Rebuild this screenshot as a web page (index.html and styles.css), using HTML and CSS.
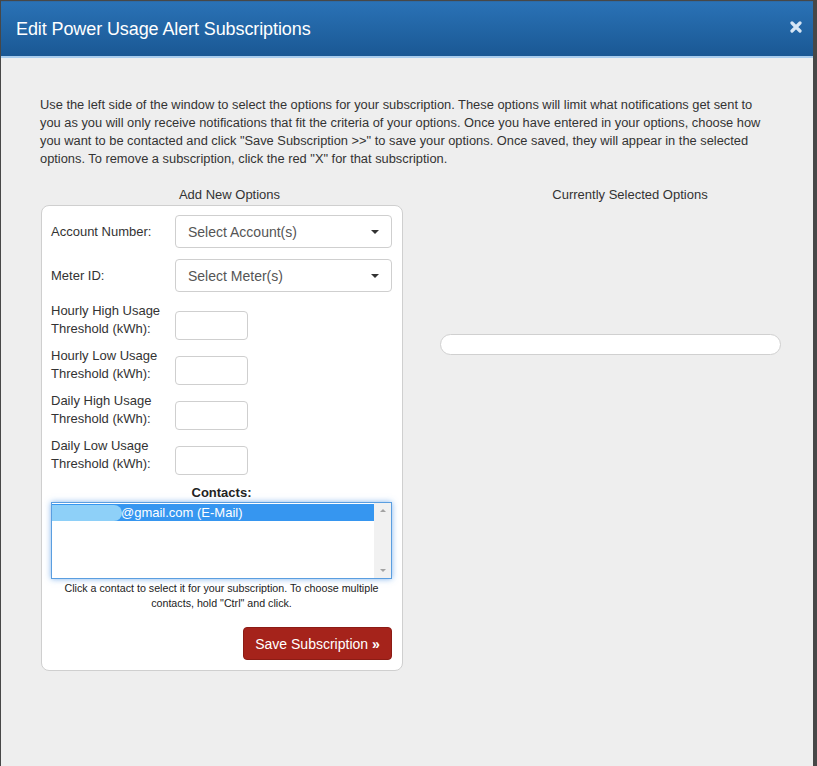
FILE: index.html
```html
<!DOCTYPE html>
<html>
<head>
<meta charset="utf-8">
<link rel="stylesheet" href="styles.css">
</head>
<body>
<div class="modal">
  <div class="modal-header">
    <h1 class="modal-title">Edit Power Usage Alert Subscriptions</h1>
    <span class="close">
      <svg width="12" height="12" viewBox="0 0 12 12"><path d="M2 2 L10 10 M10 2 L2 10" stroke="#d6e6f5" stroke-width="3.2" stroke-linecap="round"/></svg>
    </span>
  </div>
  <div class="modal-body">
    <p class="intro">Use the left side of the window to select the options for your subscription. These options will limit what notifications get sent to you as you will only receive notifications that fit the criteria of your options. Once you have entered in your options, choose how you want to be contacted and click "Save Subscription &gt;&gt;" to save your options. Once saved, they will appear in the selected options. To remove a subscription, click the red "X" for that subscription.</p>
    <div class="columns">
      <div class="col-left">
        <div class="col-title">Add New Options</div>
        <div class="panel">
          <div class="sel-row">
            <label class="lbl">Account Number:</label>
            <div class="select"><span>Select Account(s)</span><span class="caret"></span></div>
          </div>
          <div class="sel-row">
            <label class="lbl">Meter ID:</label>
            <div class="select"><span>Select Meter(s)</span><span class="caret"></span></div>
          </div>
          <div class="thresholds">
            <div class="th-row">
              <label class="lbl">Hourly High Usage<br>Threshold (kWh):</label>
              <div class="num"></div>
            </div>
            <div class="th-row">
              <label class="lbl">Hourly Low Usage<br>Threshold (kWh):</label>
              <div class="num"></div>
            </div>
            <div class="th-row">
              <label class="lbl">Daily High Usage<br>Threshold (kWh):</label>
              <div class="num"></div>
            </div>
            <div class="th-row">
              <label class="lbl">Daily Low Usage<br>Threshold (kWh):</label>
              <div class="num"></div>
            </div>
          </div>
          <div class="contacts-title">Contacts:</div>
          <div class="listbox">
            <div class="options">
              <div class="option selected"><span class="blur"></span>@gmail.com (E-Mail)</div>
            </div>
            <div class="scrollbar">
              <span class="arrow up"></span>
              <span class="arrow down"></span>
            </div>
          </div>
          <p class="help">Click a contact to select it for your subscription. To choose multiple contacts, hold "Ctrl" and click.</p>
          <div class="actions">
            <button class="save">Save Subscription <span class="raquo">&raquo;</span></button>
          </div>
        </div>
      </div>
      <div class="col-right">
        <div class="col-title">Currently Selected Options</div>
        <div class="pill"></div>
      </div>
    </div>
  </div>
</div>
</body>
</html>
```

FILE: styles.css
```css
html, body {
  margin: 0;
  padding: 0;
  height: 100%;
}
body {
  background: #474747;
  font-family: "Liberation Sans", Arial, sans-serif;
  color: #333;
  overflow: hidden;
}
.modal {
  margin: 1px 0 0 1px;
  width: 812px;
  height: 765px;
  background: #eeeeee;
  display: flex;
  flex-direction: column;
}
.modal-header {
  height: 54px;
  background: linear-gradient(#2a72b6, #1a5894);
  border-top: 1px solid #2d6aa6;
  border-bottom: 2px solid #a9cdee;
  display: flex;
  align-items: center;
  justify-content: space-between;
  padding: 0 11px 0 15px;
}
.modal-title {
  margin: 0;
  font-size: 18px;
  font-weight: normal;
  color: #fff;
  letter-spacing: -0.1px;
}
.close {
  display: flex;
  margin-top: -4px;
}
.modal-body {
  padding: 38px 43px 0 39px;
}
.intro {
  margin: 0;
  font-size: 12.85px;
  line-height: 18px;
  color: #333;
}
.columns {
  display: grid;
  grid-template-columns: 363px 380px;
  column-gap: 37px;
  margin-top: 19px;
}
.col-title {
  text-align: center;
  font-size: 13px;
  line-height: 16px;
  color: #333;
  margin-bottom: 2px;
}
.col-left .col-title {
  padding-left: 16px;
}
.panel {
  margin-left: 1px;
  background: #fff;
  border: 1px solid #cfcfcf;
  border-radius: 8px;
  padding: 9px 10px 10px 9px;
}
.lbl {
  width: 124px;
  flex: none;
  font-size: 13px;
  line-height: 18px;
  color: #333;
}
.sel-row {
  display: flex;
  align-items: center;
  margin-bottom: 11px;
}
.select {
  flex: 1;
  height: 31px;
  border: 1px solid #cfcfcf;
  border-radius: 4px;
  display: flex;
  align-items: center;
  justify-content: space-between;
  padding: 0 12px 0 12px;
  font-size: 14px;
  color: #555;
}
.caret {
  width: 0;
  height: 0;
  border-left: 4px solid transparent;
  border-right: 4px solid transparent;
  border-top: 4px solid #333;
}
.thresholds {
  display: flex;
  flex-direction: column;
  gap: 7px;
  margin-top: -1px;
}
.th-row {
  display: flex;
  align-items: flex-start;
  height: 38px;
}
.num {
  margin-top: 9px;
  width: 71px;
  height: 27px;
  border: 1px solid #cfcfcf;
  border-radius: 4px;
}
.contacts-title {
  text-align: center;
  font-weight: bold;
  font-size: 13px;
  line-height: 16px;
  margin-top: 10px;
  color: #222;
}
.listbox {
  margin-top: 1px;
  height: 75px;
  border: 1px solid #5a9ee0;
  box-shadow: 0 0 6px rgba(80, 150, 230, 0.7);
  display: flex;
  background: #fff;
}
.options {
  flex: 1;
  padding-top: 1px;
}
.option {
  height: 17px;
  font-size: 13px;
  line-height: 17px;
  display: flex;
  align-items: center;
}
.option.selected {
  background: #3696f0;
  color: #fff;
}
.blur {
  width: 70px;
  height: 16px;
  background: #8ed0f8;
  border-radius: 0 9px 9px 0;
  margin-right: -1px;
}
.scrollbar {
  width: 17px;
  background: #f1f1f1;
  display: flex;
  flex-direction: column;
  justify-content: space-between;
  align-items: center;
  padding: 6px 0;
}
.arrow {
  width: 0;
  height: 0;
  border-left: 3px solid transparent;
  border-right: 3px solid transparent;
}
.arrow.up {
  border-bottom: 3px solid #a3a3a3;
}
.arrow.down {
  border-top: 3px solid #a3a3a3;
}
.help {
  margin: 2px -4px 0;
  text-align: center;
  font-size: 10.7px;
  line-height: 15px;
  color: #222;
}
.actions {
  display: flex;
  justify-content: flex-end;
  margin-top: 16px;
}
.save {
  height: 33px;
  width: 149px;
  background: #a5231b;
  border: 1px solid #8c1c15;
  border-radius: 4px;
  color: #fff;
  font-family: "Liberation Sans", Arial, sans-serif;
  font-size: 14px;
  padding: 0;
}
.raquo {
  font-weight: bold;
}
.col-right .pill {
  margin-top: 131px;
  width: 339px;
  height: 19px;
  background: #fff;
  border: 1px solid #d0d0d0;
  border-radius: 11px;
}
```
